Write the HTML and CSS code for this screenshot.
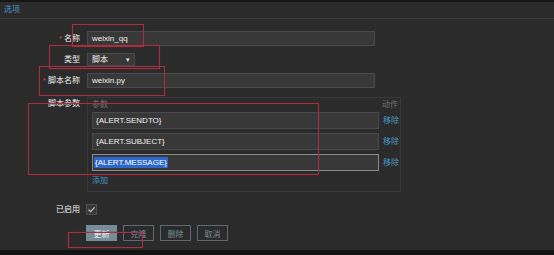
FILE: index.html
```html
<!DOCTYPE html>
<html lang="zh">
<head>
  <meta charset="UTF-8" />
  <title>报警媒介类型</title>
  <link rel="stylesheet" href="styles.css">
</head>
<body>
  <div class="topbar"></div>

  <div class="tabs">
    <a class="tab" href="#">选项</a>
  </div>

  <form class="form">
    <div class="row">
      <label class="label"><span class="req">*</span> 名称</label>
      <div class="input wide">weixin_qq</div>
    </div>

    <div class="row">
      <label class="label">类型</label>
      <div class="select">脚本 <span class="arrow">▾</span></div>
    </div>

    <div class="row">
      <label class="label"><span class="req">*</span> 脚本名称</label>
      <div class="input wide">weixin.py</div>
    </div>

    <div class="row top">
      <label class="label pad">脚本参数</label>
      <div class="params">
        <div class="params-head">
          <span>参数</span>
          <span class="action-col">动作</span>
        </div>
        <div class="param">
          <div class="input param-input">{ALERT.SENDTO}</div>
          <a class="link" href="#">移除</a>
        </div>
        <div class="param">
          <div class="input param-input">{ALERT.SUBJECT}</div>
          <a class="link" href="#">移除</a>
        </div>
        <div class="param">
          <div class="input param-input focused"><span class="selected">{ALERT.MESSAGE}</span></div>
          <a class="link" href="#">移除</a>
        </div>
        <a class="link add" href="#">添加</a>
      </div>
    </div>

    <div class="row enabled">
      <label class="label">已启用</label>
      <span class="checkbox">
        <svg width="9" height="9" viewBox="0 0 9 9"><path d="M1.5 4.6 L3.6 6.6 L7.6 2.4" fill="none" stroke="#c8c8c8" stroke-width="1.3"/></svg>
      </span>
    </div>

    <div class="buttons">
      <button class="btn primary" type="button">更新</button>
      <button class="btn" type="button">克隆</button>
      <button class="btn" type="button">删除</button>
      <button class="btn" type="button">取消</button>
    </div>
  </form>

  <div class="bottombar"></div>

  <!-- red annotation boxes drawn over the form -->
  <div class="mark" style="left:72px; top:24px; width:72px; height:23px;"></div>
  <div class="mark" style="left:49px; top:45px; width:111px; height:24px;"></div>
  <div class="mark" style="left:39px; top:66px; width:126px; height:30px;"></div>
  <div class="mark" style="left:28px; top:103px; width:291px; height:72px;"></div>
  <div class="mark" style="left:68px; top:232px; width:75px; height:16px;"></div>
</body>
</html>
```

FILE: styles.css
```css
body {
  margin: 0;
  background: #2b2b2b;
  color: #f2f2f2;
  font-family: "Liberation Sans", Arial, "Noto Sans CJK SC", sans-serif;
  font-size: 8px;
  width: 554px;
  height: 255px;
  overflow: hidden;
  position: relative;
}

.topbar {
  height: 2px;
  background: #161616;
}

.tabs {
  height: 16px;
  border-bottom: 1px solid #383838;
  display: flex;
  align-items: center;
  padding-left: 4px;
}

.tab {
  color: #4796c4;
  text-decoration: none;
  line-height: 10px;
}

.form {
  margin-top: 12px;
}

.row {
  display: flex;
  align-items: center;
}

.row.top { align-items: flex-start; margin-top: 9px; }

.row + .row { margin-top: 7px; }
.row.top { margin-top: 9px; }
.row.enabled { margin-top: 12px; }

.label {
  width: 87px;
  box-sizing: border-box;
  padding-right: 7px;
  text-align: right;
  line-height: 10px;
}

.label.pad { padding-top: 2px; }

.req {
  color: #e33734;
}

.input {
  box-sizing: border-box;
  height: 15px;
  background: #383838;
  border: 1px solid #4a4a4a;
  padding: 0 4px;
  line-height: 13px;
  color: #f2f2f2;
}

.input.wide { width: 288px; }

.select {
  box-sizing: border-box;
  width: 48px;
  height: 13px;
  background: #383838;
  border: 1px solid #4a4a4a;
  padding: 0 4px;
  line-height: 11px;
  display: flex;
  justify-content: space-between;
}

.arrow {
  font-size: 7px;
  color: #e0e0e0;
}

.params {
  width: 314px;
  height: 95px;
  box-sizing: border-box;
  border: 1px solid #383838;
  padding: 2px 0 0 4px;
}

.params-head {
  display: flex;
  justify-content: space-between;
  color: #737373;
  line-height: 10px;
  height: 10px;
  margin-bottom: 2px;
}

.action-col {
  width: 17px;
  margin-right: 1px;
}

.param {
  display: flex;
  align-items: center;
}

.param + .param { margin-top: 4px; }

.param-input {
  width: 287px;
  height: 17px;
  line-height: 15px;
  padding-left: 3px;
  margin-right: 4px;
}

.param-input.focused {
  border-color: #8a8a8a;
  padding-left: 1px;
}

.selected {
  background: #2d67c9;
  color: #ffffff;
  padding: 1px 1px;
}

.link {
  color: #4796c4;
  text-decoration: none;
  line-height: 10px;
}

.add {
  display: inline-block;
  margin-top: 5px;
}

.checkbox {
  box-sizing: border-box;
  width: 11px;
  height: 11px;
  border: 1px solid #4f4f4f;
  background: #383838;
  display: flex;
  align-items: center;
  justify-content: center;
  margin-left: -1px;
}

.buttons {
  display: flex;
  gap: 6px;
  margin: 10px 0 0 86px;
}

.btn {
  box-sizing: border-box;
  width: 31px;
  height: 16px;
  padding: 0;
  font-family: inherit;
  font-size: 8px;
  background: #2b2b2b;
  color: #768d99;
  border: 1px solid #5e6a70;
}

.btn.primary {
  background: #768d99;
  border-color: #768d99;
  color: #f2f2f2;
}

.bottombar {
  position: absolute;
  left: 0;
  right: 0;
  bottom: 0;
  height: 5px;
  background: #141414;
}

.mark {
  position: absolute;
  box-sizing: border-box;
  border: 1px solid #a8303e;
  box-shadow: 0 0 1px #7a2030;
}
```
